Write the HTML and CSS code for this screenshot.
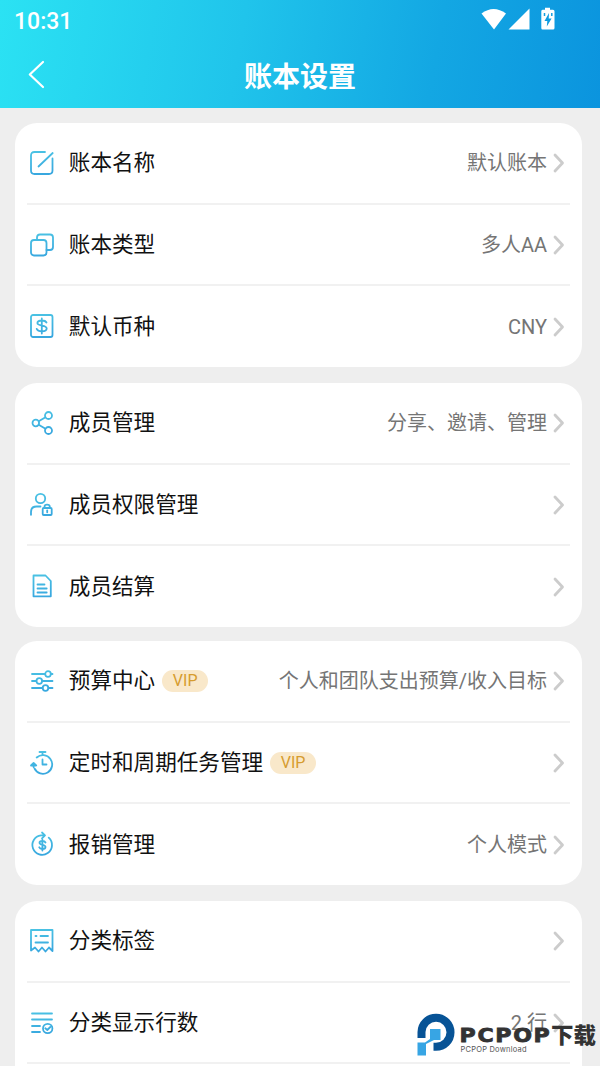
FILE: index.html
```html
<!DOCTYPE html>
<html lang="zh-CN">
<head>
<meta charset="utf-8">
<title>账本设置</title>
<link rel="stylesheet" href="styles.css">
</head>
<body>
<svg class="defs" width="0" height="0" aria-hidden="true">
  <defs>
    <linearGradient id="tint" gradientUnits="userSpaceOnUse" x1="0" y1="0" x2="4" y2="26"><stop offset="0" stop-color="#4cc5e4"/><stop offset="1" stop-color="#38a7df"/></linearGradient>
    <symbol id="chevron" viewBox="0 0 12 20"><path d="M2 2 9.500 10 2 18" fill="none" stroke="#ccc" stroke-width="2.800" stroke-linecap="round" stroke-linejoin="round"/></symbol>
  </defs>
</svg>
<header class="header">
  <div class="status">
    <span class="clock">10:31</span>
    <svg class="signals" width="76" height="24" viewBox="0 0 76 24" fill="#fff">
      <path d="M.5 5.500Q12.500-3.500 25 5.500L13 21.500Z"/>
      <path d="M48.500.500V21.500H27.500Z"/>
      <path fill-rule="evenodd" d="M64-.3H69V1.700H72Q73.500 1.700 73.500 3.200V20Q73.500 21.500 72 21.500H61.500Q60.300 21.500 60.300 20V3.200Q60.300 1.700 61.500 1.700H64ZM68 5 63.500 13H66.300L65.800 18.500 70.600 10.500H67.700Z"/>
      <path d="M63.500 5V8M70.800 5V8" stroke="#159fe0" stroke-width="1.500"/>
    </svg>
  </div>
  <div class="titlebar">
    <svg class="back" width="18" height="30" viewBox="0 0 18 30" fill="none" stroke="#fff" stroke-width="2.200" stroke-linecap="round" stroke-linejoin="round"><path d="M15 2 1.800 14.500 15 27"/></svg>
    <h1 class="title">账本设置</h1>
  </div>
</header>
<main class="list">
  <section class="card">
    <div class="row">
      <svg class="icon" viewBox="0 0 26 26"><path d="M16 2H5.500Q2 2 2 5.500V20.500Q2 24 5.500 24H20Q23.500 24 23.500 20.500V8.500M9.500 16.500 23.700 3"/></svg>
      <span class="label">账本名称</span><span class="value">默认账本</span><svg class="arrow"><use href="#chevron"/></svg>
    </div>
    <div class="row">
      <svg class="icon" viewBox="0 0 26 26"><rect x="2" y="8" width="15.500" height="15.500" rx="3"/><path d="M8 8V5.500Q8 2.500 11 2.500H21Q24 2.500 24 5.500V15Q24 18 21 18H17.500"/></svg>
      <span class="label">账本类型</span><span class="value">多人AA</span><svg class="arrow"><use href="#chevron"/></svg>
    </div>
    <div class="row">
      <svg class="icon" viewBox="0 0 26 26"><rect x="2" y="2" width="21.500" height="22" rx="2"/><path d="M17.500 9.500Q16.500 7.500 12.800 7.500 8.400 7.500 8.400 10.100C8.400 13.600 17.700 11.700 17.700 15.500Q17.700 18.300 12.800 18.300 8.700 18.300 7.700 15.900M12.800 5.500V20.500"/></svg>
      <span class="label">默认币种</span><span class="value">CNY</span><svg class="arrow"><use href="#chevron"/></svg>
    </div>
  </section>
  <section class="card">
    <div class="row">
      <svg class="icon" viewBox="0 0 26 26"><circle cx="6.800" cy="13" r="3.300"/><circle cx="19.500" cy="5.500" r="3.500"/><circle cx="19.500" cy="20.500" r="3.500"/><path d="M9.700 11.300 16.500 7.200M9.700 14.700 16.500 18.800"/></svg>
      <span class="label">成员管理</span><span class="value">分享、邀请、管理</span><svg class="arrow"><use href="#chevron"/></svg>
    </div>
    <div class="row">
      <svg class="icon" viewBox="0 0 26 26"><circle cx="11.500" cy="6.500" r="4.700"/><path d="M2 22.800V20Q2 14.500 7.500 14.500H11.500M15.500 16V14.700Q15.500 12.700 18 12.700 20.800 12.700 20.800 14.700V16"/><rect x="13.700" y="16" width="9" height="7" rx="1"/><path d="M18.200 18.500V20.300"/></svg>
      <span class="label">成员权限管理</span><svg class="arrow"><use href="#chevron"/></svg>
    </div>
    <div class="row">
      <svg class="icon" viewBox="0 0 26 26"><path d="M4.500 2.500H16.500L21.800 8V23.300H4.500ZM8.500 11.500H15.500M8.500 15.500H17.700M8.500 19.500H17.700"/></svg>
      <span class="label">成员结算</span><svg class="arrow"><use href="#chevron"/></svg>
    </div>
  </section>
  <section class="card card-raised">
    <div class="row">
      <svg class="icon" viewBox="0 0 26 26"><path d="M3 6H16M22 6H23.500M3 13H7M13.500 13H23.500M3 20H13.500M19.500 20H23.500"/><circle cx="19" cy="6" r="2.800"/><circle cx="10.300" cy="13" r="2.800"/><circle cx="16.500" cy="20" r="2.800"/></svg>
      <span class="label">预算中心</span><span class="vip">VIP</span><span class="value">个人和团队支出预算/收入目标</span><svg class="arrow"><use href="#chevron"/></svg>
    </div>
    <div class="row">
      <svg class="icon" viewBox="0 0 26 26"><path d="M10.500 2H16.500M13.500 2V5M7.700 7.500A9.300 9.300 0 1 1 5.500 18.500M4.600 17A9 9 0 0 1 4.600 14M13.500 9.500V14.500H17.500"/><path d="M2 15.500 4.600 13 7.200 15.500Z" fill="#3daee1"/></svg>
      <span class="label">定时和周期任务管理</span><span class="vip">VIP</span><svg class="arrow"><use href="#chevron"/></svg>
    </div>
    <div class="row">
      <svg class="icon" viewBox="0 0 26 26"><path d="M19.700 6.700A9.800 9.800 0 1 1 12 4.300H15.500M13 1.500 16 4.300 13 7.300M16.500 11.500Q15.700 10 13.300 10 10.500 10 10.500 11.800C10.500 14.500 16.500 13.300 16.500 16Q16.500 18 13.500 18 10.800 18 10.200 16.300M13.400 8.700V19.500"/></svg>
      <span class="label">报销管理</span><span class="value">个人模式</span><svg class="arrow"><use href="#chevron"/></svg>
    </div>
  </section>
  <section class="card card-cut">
    <div class="row">
      <svg class="icon" viewBox="0 0 26 26"><path d="M2 2H23.500V23L20 19.500 16.500 23.500 13 19.500 9.500 23.500 6 19.500 2 22.500ZM6.500 8H7.500M11.500 8H19M6.500 14.500H19"/></svg>
      <span class="label">分类标签</span><svg class="arrow"><use href="#chevron"/></svg>
    </div>
    <div class="row divided">
      <svg class="icon" viewBox="0 0 26 26"><path d="M3 3.500H23M3 9.500H23M3 16H11M3 22H11M16.300 18.300 18.300 20 21.300 17"/><circle cx="18.700" cy="18.500" r="4.700"/></svg>
      <span class="label">分类显示行数</span><span class="value">2 行</span><svg class="arrow"><use href="#chevron"/></svg>
    </div>
  </section>
</main>
<svg class="watermark" width="186" height="48" viewBox="0 0 186 48">
  <path d="M7.500 27V21A14.500 14.500 0 1 1 22 35.800H19.500" fill="none" stroke="#075396" stroke-width="8"/>
  <path d="M16 18H26.500V29H20L12 33V44.500H3.500V31.500H11L16 28Z" fill="#37a5e4"/>
  <text class="brand" x="45.500" y="31" textLength="92" lengthAdjust="spacingAndGlyphs">PCPOP</text>
  <text class="brand-cn" x="137" y="31.500" textLength="45" lengthAdjust="spacingAndGlyphs">下载</text>
  <text class="brand-sub" x="46.500" y="40.800" textLength="66" lengthAdjust="spacing">PCPOP Download</text>
</svg>
</body>
</html>
```
FILE: styles.css
```css
* { box-sizing: border-box; }
html, body { margin: 0; height: 1066px; overflow: hidden; }
body {
  position: relative;
  width: 600px;
  background: #eee;
  font-family: Roboto, "Noto Sans CJK SC", sans-serif;
}
.defs { position: absolute; }
.header {
  height: 108px;
  background: linear-gradient(100deg, #2be2f3 0%, #20c4eb 40%, #13a7e3 72%, #0b94de 100%);
  color: #fff;
}
.status {
  display: flex;
  justify-content: space-between;
  align-items: center;
  height: 42px;
  padding: 0 43px 0 14px;
}
.clock { padding-top: 1px; font-size: 23px; font-weight: 500; line-height: 41px; }
.signals { margin-top: -2px; overflow: visible; }
.titlebar {
  display: grid;
  grid-template-columns: 60px 1fr 60px;
  align-items: center;
  height: 66px;
}
.back { margin-left: 28px; }
.title {
  margin: 0;
  padding-top: 5px;
  text-align: center;
  font-size: 28px;
  line-height: 61px;
  font-weight: 700;
}
.list { padding: 15px 18px 0 15px; }
.card {
  height: 243.500px;
  margin-bottom: 16.500px;
  padding: 0 12px;
  border-radius: 22px;
  background: #fff;
}
.card-raised { margin-top: -2px; }
.card-cut {
  height: 165px;
  margin-bottom: 0;
  border-radius: 22px 22px 0 0;
}
.row {
  display: flex;
  align-items: center;
  height: 81.700px;
  border-bottom: 2px solid #f1f1f1;
}
.row:last-child { border-bottom-color: transparent; }
.row.divided { border-bottom-color: #f1f1f1; }
.icon {
  flex: none;
  width: 26px;
  height: 26px;
  margin: 0 13px 0 2px;
  fill: none;
  stroke: url(#tint);
  stroke-width: 1.800;
  stroke-linecap: round;
  stroke-linejoin: round;
}
.label { margin: 1px 0 0 .8px; font-size: 21.600px; line-height: 32px; color: #111; }
.value { margin: 1px 0 0 auto; font-size: 20px; line-height: 30px; color: #757575; }
.arrow { flex: none; width: 12px; height: 20px; margin: 1px 5px 0 auto; }
.value + .arrow { margin-left: 6px; }
.vip {
  width: 46px;
  height: 22px;
  margin: 1px 0 0 7px;
  border-radius: 11px;
  background: #f9e8ca;
  color: #d69c2f;
  font-size: 16px;
  line-height: 21px;
  text-align: center;
}
.watermark { position: absolute; left: 414px; top: 1011px; }
.brand {
  font: 700 19.500px "DejaVu Sans", sans-serif;
  letter-spacing: 1.500px;
  fill: #333;
  stroke: #333;
  stroke-width: .8px;
}
.brand-cn { font: 900 22px "Noto Sans CJK SC", sans-serif; fill: #333; }
.brand-sub { font: 7.500px Inter, sans-serif; fill: #555; }
```
